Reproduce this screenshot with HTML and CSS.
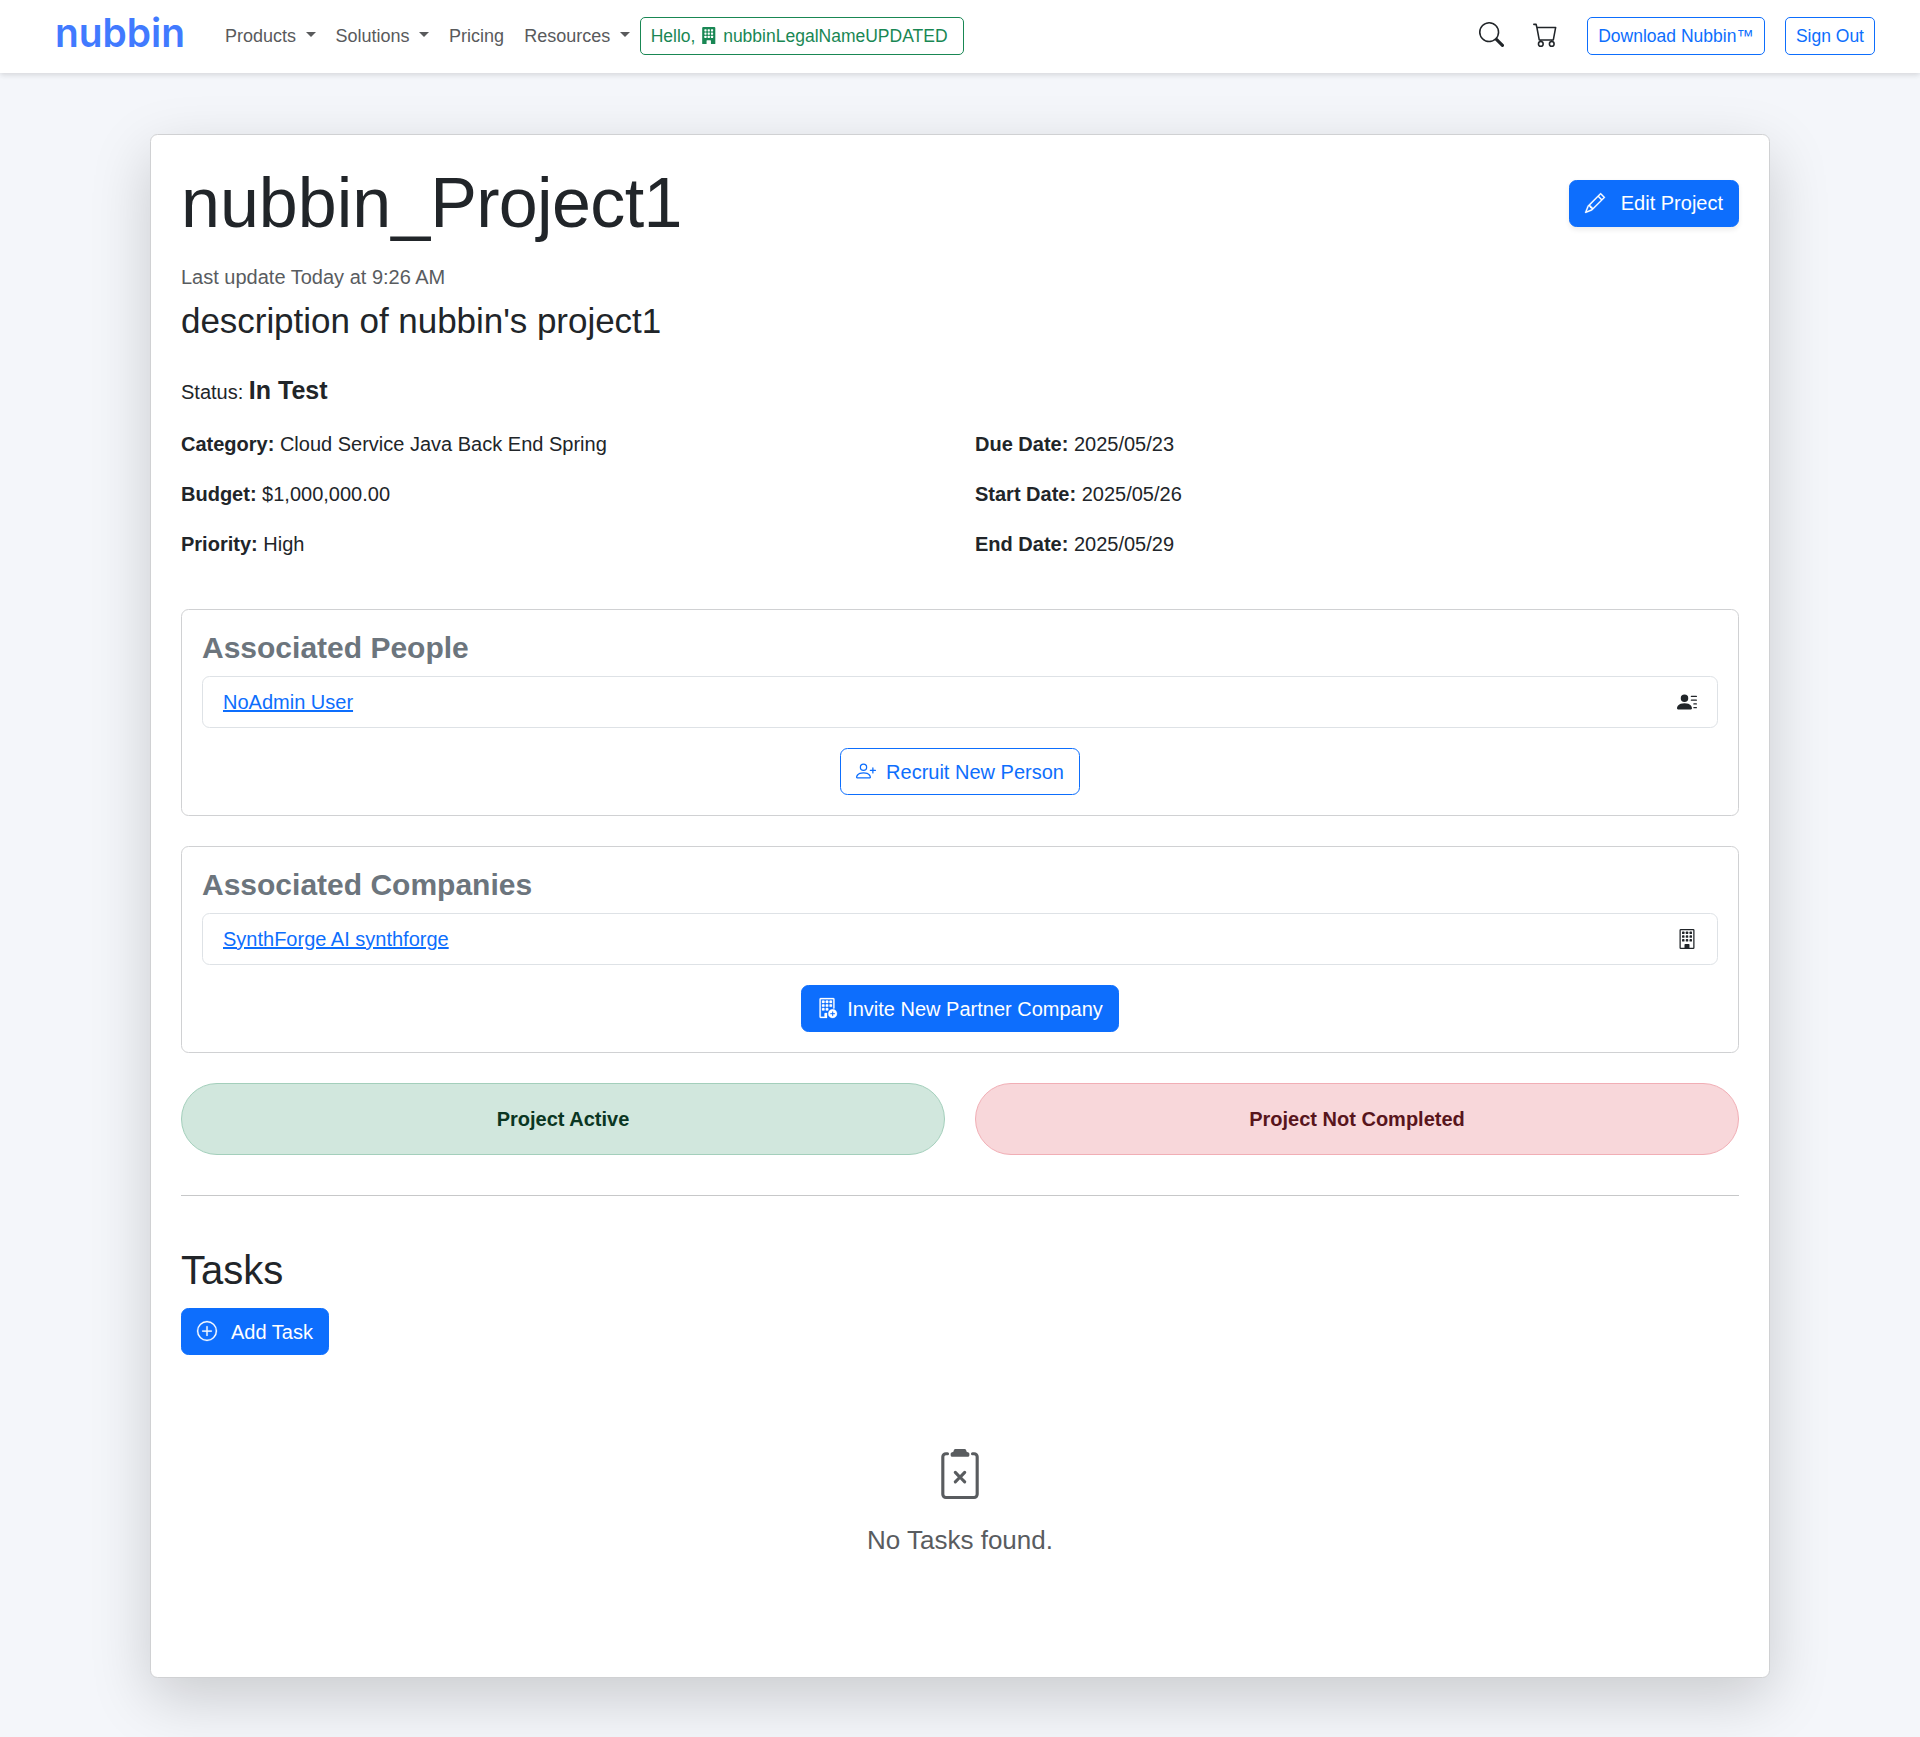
FILE: index.html
```
<!DOCTYPE html>
<html lang="en">
<head>
<meta charset="utf-8">
<title>nubbin_Project1</title>
<link rel="stylesheet" href="styles.css">
</head>
<body>
<svg class="sprite" aria-hidden="true">
  <symbol id="windows" viewBox="0 0 16 16">
    <rect x="4" y="2" width="2" height="2" rx=".5"/><rect x="7" y="2" width="2" height="2" rx=".5"/><rect x="10" y="2" width="2" height="2" rx=".5"/>
    <rect x="4" y="5" width="2" height="2" rx=".5"/><rect x="7" y="5" width="2" height="2" rx=".5"/><rect x="10" y="5" width="2" height="2" rx=".5"/>
    <rect x="4" y="8" width="2" height="2" rx=".5"/><rect x="7" y="8" width="2" height="2" rx=".5"/>
  </symbol>
</svg>
<header class="navbar">
  <a class="brand" href="#" aria-label="nubbin">
    <svg width="130" height="40" viewBox="0 0 130 40"><text class="brand-text" x="-1" y="37" textLength="130" lengthAdjust="spacingAndGlyphs">nubbin</text></svg>
  </a>
  <nav class="nav-links">
    <a class="nav-link dropdown" href="#">Products</a>
    <a class="nav-link dropdown" href="#">Solutions</a>
    <a class="nav-link" href="#">Pricing</a>
    <a class="nav-link dropdown" href="#">Resources</a>
    <a class="btn btn-sm btn-outline-success" href="#">Hello,
      <svg class="icon" viewBox="0 0 16 16"><path d="M3 0a1 1 0 0 0-1 1v14a1 1 0 0 0 1 1h3v-3.5a.5.5 0 0 1 .5-.5h3a.5.5 0 0 1 .5.5V16h3a1 1 0 0 0 1-1V1a1 1 0 0 0-1-1z"/><g class="cutout"><use href="#windows"/><rect x="10" y="8" width="2" height="2" rx=".5"/></g></svg>
      nubbinLegalNameUPDATED</a>
  </nav>
  <div class="nav-actions">
    <a class="nav-icon" href="#" aria-label="Search"><svg viewBox="0 0 16 16"><path d="M11.742 10.344a6.5 6.5 0 1 0-1.397 1.398h-.001q.044.06.098.115l3.85 3.85a1 1 0 0 0 1.415-1.414l-3.85-3.85a1 1 0 0 0-.115-.1zM12 6.5a5.5 5.5 0 1 1-11 0 5.5 5.5 0 0 1 11 0"/></svg></a>
    <a class="nav-icon" href="#" aria-label="Cart"><svg viewBox="0 0 16 16"><path d="M0 1.5A.5.5 0 0 1 .5 1H2a.5.5 0 0 1 .485.379L2.89 3H14.5a.5.5 0 0 1 .491.592l-1.5 8A.5.5 0 0 1 13 12H4a.5.5 0 0 1-.491-.408L2.01 3.607 1.61 2H.5a.5.5 0 0 1-.5-.5M3.102 4l1.313 7h8.17l1.313-7zM5 12a2 2 0 1 0 0 4 2 2 0 0 0 0-4m7 0a2 2 0 1 0 0 4 2 2 0 0 0 0-4m-7 1a1 1 0 1 1 0 2 1 1 0 0 1 0-2m7 0a1 1 0 1 1 0 2 1 1 0 0 1 0-2"/></svg></a>
    <a class="btn btn-sm btn-outline-primary download" href="#">Download Nubbin™</a>
    <a class="btn btn-sm btn-outline-primary" href="#">Sign Out</a>
  </div>
</header>

<main class="project card">
  <div class="project-head">
    <h1>nubbin_<span class="tight">Project1</span></h1>
    <a class="btn btn-primary edit" href="#"><svg class="icon" viewBox="0 0 16 16"><path d="M12.146.146a.5.5 0 0 1 .708 0l3 3a.5.5 0 0 1 0 .708l-10 10a.5.5 0 0 1-.168.11l-5 2a.5.5 0 0 1-.65-.65l2-5a.5.5 0 0 1 .11-.168zM11.207 2.5 13.5 4.793 14.793 3.5 12.5 1.207zm1.586 3L10.5 3.207 4 9.707V10h.5a.5.5 0 0 1 .5.5v.5h.5a.5.5 0 0 1 .5.5v.5h.293zm-9.761 5.175-.106.106-1.528 3.821 3.821-1.528.106-.106A.5.5 0 0 1 5 12.5V12h-.5a.5.5 0 0 1-.5-.5V11h-.5a.5.5 0 0 1-.468-.325"/></svg>Edit Project</a>
  </div>
  <p class="updated">Last update Today at 9:26 AM</p>
  <p class="description">description of nubbin's project1</p>
  <p class="status">Status: <strong>In Test</strong></p>
  <div class="facts">
    <p><b>Category:</b> Cloud Service Java Back End Spring</p>
    <p><b>Due Date:</b> 2025/05/23</p>
    <p><b>Budget:</b> $1,000,000.00</p>
    <p><b>Start Date:</b> 2025/05/26</p>
    <p><b>Priority:</b> High</p>
    <p><b>End Date:</b> 2025/05/29</p>
  </div>

  <section class="card associated">
    <h2>Associated People</h2>
    <div class="list-item"><a href="#">NoAdmin User</a>
      <svg class="icon" viewBox="0 0 16 16"><path d="M6 8a3 3 0 1 0 0-6 3 3 0 0 0 0 6m-5 6s-1 0-1-1 1-4 6-4 6 3 6 4-1 1-1 1zM11 3.5a.5.5 0 0 1 .5-.5h4a.5.5 0 0 1 0 1h-4a.5.5 0 0 1-.5-.5m.5 2.5a.5.5 0 0 0 0 1h4a.5.5 0 0 0 0-1zm2 3a.5.5 0 0 0 0 1h2a.5.5 0 0 0 0-1zm0 3a.5.5 0 0 0 0 1h2a.5.5 0 0 0 0-1z"/></svg></div>
    <a class="btn btn-outline-primary" href="#"><svg class="icon" viewBox="0 0 16 16"><path d="M6 8a3 3 0 1 0 0-6 3 3 0 0 0 0 6m2-3a2 2 0 1 1-4 0 2 2 0 0 1 4 0m4 8c0 1-1 1-1 1H1s-1 0-1-1 1-4 6-4 6 3 6 4m-1-.004c-.001-.246-.154-.986-.832-1.664C9.516 10.68 8.289 10 6 10s-3.516.68-4.168 1.332c-.678.678-.83 1.418-.832 1.664z"/><path d="M13.5 5a.5.5 0 0 1 .5.5V7h1.5a.5.5 0 0 1 0 1H14v1.5a.5.5 0 0 1-1 0V8h-1.5a.5.5 0 0 1 0-1H13V5.5a.5.5 0 0 1 .5-.5"/></svg>Recruit New Person</a>
  </section>

  <section class="card associated">
    <h2>Associated Companies</h2>
    <div class="list-item"><a href="#">SynthForge AI synthforge</a>
      <svg class="icon" viewBox="0 0 16 16"><use href="#windows"/><rect x="10" y="8" width="2" height="2" rx=".5"/><path d="M2 1a1 1 0 0 1 1-1h10a1 1 0 0 1 1 1v14a1 1 0 0 1-1 1H3a1 1 0 0 1-1-1zm11 0H3v14h3v-2.5a.5.5 0 0 1 .5-.5h3a.5.5 0 0 1 .5.5V15h3z"/></svg></div>
    <a class="btn btn-primary" href="#"><svg class="icon" viewBox="0 0 16 16"><use href="#windows"/><path d="M12.5 16a3.5 3.5 0 1 0 0-7 3.5 3.5 0 0 0 0 7m.5-5v1h1a.5.5 0 0 1 0 1h-1v1a.5.5 0 0 1-1 0v-1h-1a.5.5 0 0 1 0-1h1v-1a.5.5 0 0 1 1 0"/><path d="M2 1a1 1 0 0 1 1-1h10a1 1 0 0 1 1 1v7a.5.5 0 0 1-1 0V1H3v14h3v-2.5a.5.5 0 0 1 .5-.5H8v4H3a1 1 0 0 1-1-1z"/></svg>Invite New Partner Company</a>
  </section>

  <div class="flags">
    <div class="flag flag-success">Project Active</div>
    <div class="flag flag-danger">Project Not Completed</div>
  </div>
  <hr>
  <section class="tasks">
    <h2>Tasks</h2>
    <a class="btn btn-primary add" href="#"><svg class="icon" viewBox="0 0 16 16"><path d="M8 15A7 7 0 1 1 8 1a7 7 0 0 1 0 14m0 1A8 8 0 1 0 8 0a8 8 0 0 0 0 16"/><path d="M8 4a.5.5 0 0 1 .5.5v3h3a.5.5 0 0 1 0 1h-3v3a.5.5 0 0 1-1 0v-3h-3a.5.5 0 0 1 0-1h3v-3A.5.5 0 0 1 8 4"/></svg>Add Task</a>
    <div class="empty">
      <svg viewBox="0 0 16 16"><path d="M9.5 0a.5.5 0 0 1 .5.5.5.5 0 0 0 .5.5.5.5 0 0 1 .5.5V2a.5.5 0 0 1-.5.5h-5A.5.5 0 0 1 5 2v-.5a.5.5 0 0 1 .5-.5.5.5 0 0 0 .5-.5.5.5 0 0 1 .5-.5z"/><path d="M3 2.5a.5.5 0 0 1 .5-.5H4a.5.5 0 0 0 0-1h-.5A1.5 1.5 0 0 0 2 2.5v12A1.5 1.5 0 0 0 3.5 16h9a1.5 1.5 0 0 0 1.5-1.5v-12A1.5 1.5 0 0 0 12.5 1H12a.5.5 0 0 0 0 1h.5a.5.5 0 0 1 .5.5v12a.5.5 0 0 1-.5.5h-9a.5.5 0 0 1-.5-.5z"/><path d="M8 8.293 6.854 7.146a.5.5 0 1 0-.708.708L7.293 9l-1.147 1.146a.5.5 0 0 0 .708.708L8 9.707l1.146 1.147a.5.5 0 0 0 .708-.708L8.707 9l1.147-1.146a.5.5 0 0 0-.708-.708z"/></svg>
      <p>No Tasks found.</p>
    </div>
  </section>
</main>
</body>
</html>
```
FILE: styles.css
```
* { box-sizing: border-box; }
html { font-size: 20px; }
body {
  margin: 0;
  min-height: 1737px;
  background: #f4f6fa;
  color: #212529;
  font-family: "Liberation Sans", Arial, sans-serif;
  font-size: 20px;
  line-height: 1.5;
}
h1, h2, p { margin: 0; font-weight: 400; }
svg { fill: currentColor; }
.sprite { display: none; }
.icon { width: 1em; height: 1em; vertical-align: -.125em; }

.navbar {
  display: flex;
  align-items: center;
  height: 73px;
  padding: 0 45px 1px 56px;
  background: #fff;
  box-shadow: 0 2.5px 5px rgba(0, 0, 0, .075), 0 0 7px rgba(0, 0, 0, .08);
  position: relative;
}
.brand { display: flex; width: 159px; color: #417aff; }
.brand svg { overflow: visible; margin-top: -12px; }
.brand-text { font: 600 40px Inter, sans-serif; }
.nav-links { display: flex; align-items: center; }
.nav-link {
  padding: 0 10px;
  color: #595a5c;
  font-size: 18px;
  text-decoration: none;
}
.dropdown::after {
  content: "";
  display: inline-block;
  margin-left: 9.5px;
  vertical-align: 4.5px;
  border-top: 5px solid;
  border-left: 5px solid transparent;
  border-right: 5px solid transparent;
}
.nav-actions { display: flex; align-items: center; margin-left: auto; }
.nav-icon { display: flex; color: #212529; margin: 0 29px 3px 0; }
.nav-icon svg { width: 25px; height: 25px; }
.download { margin-right: 20px; }

.btn {
  display: inline-block;
  padding: 7.5px 15px;
  border: 1px solid;
  border-radius: 7.5px;
  text-decoration: none;
  white-space: nowrap;
}
.btn .icon { margin-right: 10px; }
.btn-sm { padding: 5px 10px; border-radius: 5px; font-size: 17.5px; }
.btn-sm .icon { margin: 0 .5px 0 0; }
.btn-outline-success { color: #198754; padding-right: 15px; }
.btn-outline-primary { color: #0d6efd; }
.btn-primary { background: #0d6efd; border-color: #0d6efd; color: #fff; }
.btn-primary .icon { stroke: currentColor; stroke-width: .2; overflow: visible; }
.btn-primary.edit { box-shadow: 0 2.5px 5px rgba(0, 0, 0, .075); }
.edit .icon { margin-right: 16px; }
.add .icon { margin-right: 14px; }
.cutout { fill: #fff; }

.card {
  background: #fff;
  border: 1px solid #d0d1d3;
  border-radius: 7.5px;
}
.project {
  width: 1620px;
  height: 1544px;
  margin: 61px auto 0;
  padding: 26px 30px;
  box-shadow: 0 20px 60px rgba(0, 0, 0, .175);
}
.project-head { display: flex; justify-content: space-between; align-items: center; }
.project-head h1 { font-size: 70px; line-height: 84px; }
.tight { letter-spacing: -.65px; }
.updated { margin-top: 17px; color: #595c5f; }
.description { margin-top: 8px; font-size: 35px; line-height: 42px; letter-spacing: -.04px; }
.status { margin-top: 30px; line-height: 37.5px; }
.status strong { font-size: 25px; }
.facts { display: grid; grid-template-columns: 1fr 1fr; gap: 20px 30px; margin-top: 17.5px; }
.associated {
  display: flex;
  flex-direction: column;
  align-items: center;
  padding: 20px;
  margin-bottom: 30px;
}
.facts + .associated { margin-top: 50px; }
.associated h2 {
  align-self: stretch;
  margin-bottom: 10px;
  color: #6c757d;
  font-size: 30px;
  line-height: 36px;
  font-weight: 700;
}
.list-item {
  display: flex;
  align-self: stretch;
  align-items: center;
  justify-content: space-between;
  padding: 10px 20px;
  margin-bottom: 20px;
  border: 1px solid #dee2e6;
  border-radius: 7.5px;
}
.list-item a { color: #0d6efd; }
.flags { display: grid; grid-template-columns: 1fr 1fr; gap: 30px; }
.flag {
  padding: 20px;
  border: 1px solid;
  border-radius: 36px;
  text-align: center;
  font-weight: 700;
}
.flag-success { background: #d1e7dd; border-color: #a3cfbb; color: #0a3622; }
.flag-danger { background: #f8d7da; border-color: #f1aeb5; color: #58151c; }
hr { margin: 40px 0 50px; border: 0; border-top: 1px solid #c7c8c9; }
.tasks h2 { margin-bottom: 14px; font-size: 40px; line-height: 48px; }
.empty {
  display: flex;
  flex-direction: column;
  align-items: center;
  margin-top: 94px;
  color: #595c5f;
  font-size: 26px;
}
.empty svg { width: 50px; height: 50px; margin-bottom: 22px; }
```
